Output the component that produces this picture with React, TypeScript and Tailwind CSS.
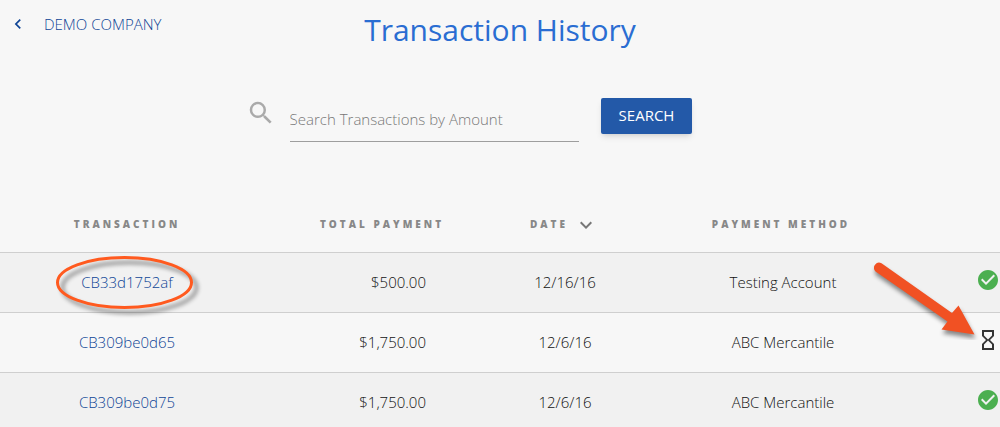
import { useState } from "react";
import {
  MdCheckCircle,
  MdHourglassEmpty,
  MdKeyboardArrowLeft,
  MdKeyboardArrowDown,
  MdSearch,
} from "react-icons/md";

interface Transaction {
  id: string;
  total: string;
  date: string;
  method: string;
  status: "complete" | "pending";
  circled?: boolean;
  pointed?: boolean;
}

const transactions: Transaction[] = [
  {
    id: "CB33d1752af",
    total: "$500.00",
    date: "12/16/16",
    method: "Testing Account",
    status: "complete",
    circled: true,
  },
  {
    id: "CB309be0d65",
    total: "$1,750.00",
    date: "12/6/16",
    method: "ABC Mercantile",
    status: "pending",
    pointed: true,
  },
  {
    id: "CB309be0d75",
    total: "$1,750.00",
    date: "12/6/16",
    method: "ABC Mercantile",
    status: "complete",
  },
];

const Circle = () => (
  <svg
    className="absolute -left-7 -top-5 w-[150px] h-[68px] pointer-events-none"
    viewBox="0 0 150 68"
    fill="none"
    aria-hidden="true"
  >
    <ellipse
      cx="71.5"
      cy="31.5"
      rx="67"
      ry="25"
      stroke="#ff5a1f"
      strokeWidth="3"
      className="drop-shadow-[5px_5px_2px_rgba(0,0,0,0.45)]"
    />
  </svg>
);

const Arrow = () => (
  <svg
    className="absolute right-5 -top-18 w-[110px] h-[84px] pointer-events-none"
    viewBox="0 0 110 84"
    aria-hidden="true"
  >
    <path
      d="M11.500 7.200 L82 57 L88.500 49.500 L104.500 78.500 L71.500 73.500 L77.500 65.500 L5.500 15.500 A5.200 5.200 0 0 1 11.500 7.200 Z"
      fill="#f15123"
      className="drop-shadow-[1px_4px_2px_rgba(0,0,0,0.45)]"
    />
  </svg>
);

const Row = ({ transaction }: { transaction: Transaction }) => (
  <tr className="h-15 border-t border-[#cfcfcf] odd:bg-[#f1f1f1]">
    <td className="text-center">
      <span className="relative inline-block">
        <a href="#transaction" className="text-[#0f4596]">
          {transaction.id}
        </a>
        {transaction.circled && <Circle />}
      </span>
    </td>
    <td className="text-right pr-[84px]">{transaction.total}</td>
    <td className="text-center">{transaction.date}</td>
    <td className="text-center">{transaction.method}</td>
    <td>
      <div className="relative flex justify-end pb-1">
        {transaction.status === "complete" ? (
          <MdCheckCircle
            className="size-6 text-[#4caf50]"
            aria-label="Complete"
          />
        ) : (
          <MdHourglassEmpty
            className="size-6 text-[#333]"
            aria-label="Pending"
          />
        )}
        {transaction.pointed && <Arrow />}
      </div>
    </td>
  </tr>
);

export default function App() {
  const [query, setQuery] = useState("");

  return (
    <main className="h-screen overflow-hidden bg-[#f7f7f7] font-['Open_Sans',sans-serif] text-[15px] text-[#111]">
      <header className="grid grid-cols-[1fr_auto_1fr] pt-2">
        <a
          href="#company"
          className="flex items-center self-start gap-4 h-8 pl-2 font-light text-[#0f4596]"
        >
          <MdKeyboardArrowLeft className="size-5" />
          DEMO COMPANY
        </a>
        <h1 className="text-[30px] leading-11 font-normal text-[#2a6dd2]">
          Transaction History
        </h1>
      </header>

      <form
        className="flex justify-center pt-[46px] pr-[62px]"
        onSubmit={(e) => e.preventDefault()}
      >
        <label htmlFor="search" className="pr-3.5" aria-label="Search">
          <MdSearch className="size-[30px] text-[#aaa]" />
        </label>
        <input
          id="search"
          className="w-[289px] h-11 pb-0.5 border-b border-[#9e9e9e] bg-transparent outline-none font-light placeholder:text-[#777]"
          placeholder="Search Transactions by Amount"
          value={query}
          onChange={(e) => setQuery(e.target.value)}
        />
        <button
          type="submit"
          className="ml-[22px] h-9 px-[18px] pb-0.5 rounded-xs bg-[#2359a8] text-white shadow-md cursor-pointer"
        >
          SEARCH
        </button>
      </form>

      <table className="mt-[54px] w-full table-fixed font-light">
        <colgroup>
          <col className="w-[25.400%]" />
          <col className="w-[25.600%]" />
          <col className="w-[11%]" />
          <col className="w-[32.600%]" />
          <col />
        </colgroup>
        <thead>
          <tr className="h-14 text-[10px] uppercase tracking-[3px] text-[#888]">
            <th className="pt-0.5 font-extrabold">Transaction</th>
            <th className="pt-0.5 font-extrabold">Total Payment</th>
            <th className="pt-0.5 font-extrabold">
              <button
                type="button"
                className="flex items-center gap-1.5 pl-5 uppercase tracking-[3px] cursor-pointer"
              >
                Date
                <MdKeyboardArrowDown className="size-6 text-[#777]" />
              </button>
            </th>
            <th className="pt-0.5 pr-1 font-extrabold">Payment Method</th>
            <th aria-label="Status" />
          </tr>
        </thead>
        <tbody>
          {transactions.map((transaction) => (
            <Row key={transaction.id} transaction={transaction} />
          ))}
        </tbody>
      </table>
    </main>
  );
}
